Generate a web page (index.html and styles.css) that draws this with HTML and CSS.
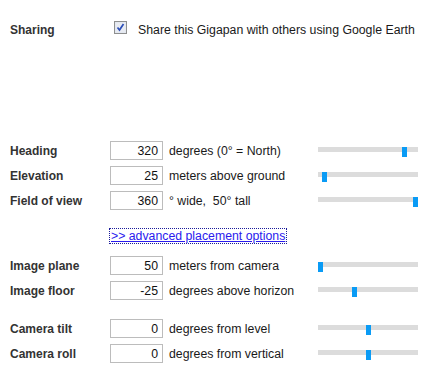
FILE: index.html
```html
<!DOCTYPE html>
<html>
<head>
<meta charset="utf-8">
<link rel="stylesheet" href="styles.css">
</head>
<body>
<div class="panel">
  <div class="sharing">
    <span class="label">Sharing</span>
    <span class="checkbox"><svg width="13" height="13" viewBox="0 0 13 13"><rect x="0.5" y="0.5" width="12" height="12" fill="#dfe4ee" stroke="#8e8f8f"/><rect x="1.5" y="1.5" width="10" height="10" fill="#e8ebf2"/><path d="M3.5 6.5 L5.5 9 L9.5 3" fill="none" stroke="#2c4fb8" stroke-width="1.7"/></svg></span>
    <span class="share-text">Share this Gigapan with others using Google Earth</span>
  </div>

  <div class="group g1">
    <span class="label">Heading</span><span class="num">320</span><span class="unit">degrees (0° = North)</span><span class="track"><span class="handle" style="left:84px"></span></span>
    <span class="label">Elevation</span><span class="num">25</span><span class="unit">meters above ground</span><span class="track"><span class="handle" style="left:4px"></span></span>
    <span class="label">Field of view</span><span class="num">360</span><span class="unit">° wide,&nbsp; 50° tall</span><span class="track"><span class="handle" style="left:95px"></span></span>
  </div>

  <div class="link-row"><a class="adv" href="#">&gt;&gt; advanced placement options</a></div>

  <div class="group g2">
    <span class="label">Image plane</span><span class="num">50</span><span class="unit">meters from camera</span><span class="track"><span class="handle" style="left:0px"></span></span>
    <span class="label">Image floor</span><span class="num">-25</span><span class="unit">degrees above horizon</span><span class="track"><span class="handle" style="left:34px"></span></span>
  </div>

  <div class="group g3">
    <span class="label">Camera tilt</span><span class="num">0</span><span class="unit">degrees from level</span><span class="track"><span class="handle" style="left:48px"></span></span>
    <span class="label">Camera roll</span><span class="num">0</span><span class="unit">degrees from vertical</span><span class="track"><span class="handle" style="left:48px"></span></span>
  </div>
</div>
</body>
</html>
```

FILE: styles.css
```css
html, body {
  margin: 0;
  padding: 0;
  background: #ffffff;
}
body {
  font-family: "Liberation Sans", Arial, sans-serif;
  font-size: 12px;
  color: #1a1a1a;
}
.panel {
  padding-left: 10px;
  padding-top: 18px;
}
.sharing {
  display: flex;
  align-items: center;
  height: 19px;
}
.sharing .label {
  width: 104px;
  padding-top: 4px;
}
.checkbox {
  display: flex;
  width: 13px;
  height: 13px;
}
.share-text {
  margin-left: 11px;
  padding-top: 4px;
  font-size: 12.3px;
}
.label {
  font-weight: bold;
  color: #333333;
}
.group {
  display: grid;
  grid-template-columns: 100px 53px 155px 100px;
  grid-auto-rows: 19px;
  row-gap: 6px;
  align-items: center;
}
.group .label {
  padding-top: 1px;
}
.g1 { margin-top: 104px; }
.g2 { margin-top: 12px; }
.g3 { margin-top: 19px; }
.num {
  box-sizing: border-box;
  height: 19px;
  border: 1px solid #bcbcbc;
  text-align: right;
  padding-right: 4px;
  line-height: 18px;
  font-size: 12.3px;
  color: #111;
}
.unit {
  padding-left: 6px;
  padding-top: 1px;
  font-size: 12.3px;
  color: #1a1a1a;
}
.track {
  position: relative;
  align-self: start;
  margin-top: 6px;
  width: 100px;
  height: 5px;
  background: #dcdcdc;
}
.handle {
  position: absolute;
  top: 0;
  width: 5px;
  height: 10px;
  background: #0a9bf5;
}
.link-row {
  margin-top: 18px;
  padding-left: 99px;
  height: 16px;
}
.adv {
  display: inline-block;
  box-sizing: border-box;
  height: 16px;
  line-height: 14px;
  padding: 0 1px;
  font-size: 12.3px;
  border: 1px dotted #1a1a9a;
  color: #2a1aee;
  text-decoration: underline;
}
```
